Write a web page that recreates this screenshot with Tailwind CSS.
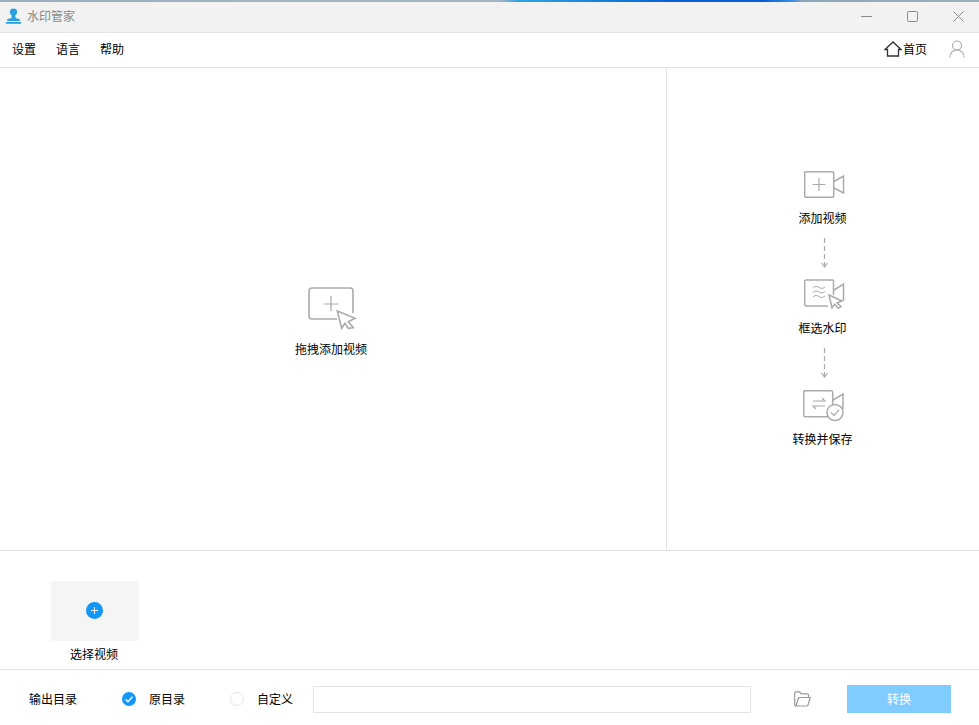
<!DOCTYPE html>
<html lang="zh-CN">

<head>
  <meta charset="UTF-8">
  <title>水印管家</title>
  <script src="https://cdn.jsdelivr.net/npm/@tailwindcss/browser@4"></script>
</head>

<body class="bg-white overflow-hidden font-['Noto_Sans_CJK_SC','Liberation_Sans',sans-serif] text-[12px] text-[#222]">
  <div class="w-[979px] h-[725px] flex flex-col">
    <!-- top stripe -->
    <div class="h-[2px] shrink-0 bg-[linear-gradient(90deg,#9db0bf_0%,#a3b5c2_51%,#2ea3e0_53%,#0a62d8_68%,#0a5fd8_78%,#3a8ee0_81%,#8fa6b8_82%,#9db0bf_100%)]"></div>

    <!-- title bar -->
    <div class="h-[31px] shrink-0 bg-[#f2f2f2] border-b border-[#e3e3e3] flex items-center pl-[6px] pb-[2px]">
      <svg class="w-[15px] h-[16px]" viewBox="0 0 15 16">
        <circle cx="7.5" cy="4" r="3.6" fill="#2b9fe0" />
        <path d="M5.8 7h3.4l.5 3.2 4 .8v2H1.300v-2l4-.8z" fill="#2b9fe0" />
        <rect x="0" y="14" width="15" height="1.800" fill="#2b9fe0" />
      </svg>
      <span class="ml-[6px] text-[#8a8a8a]">水印管家</span>
      <div class="ml-auto flex items-center pl-[2px] mr-[-2px]">
        <div class="w-[46px] h-[28px] flex items-center justify-center">
          <svg class="w-[11px] h-[11px]" viewBox="0 0 11 11"><path d="M0 5.500h11" stroke="#8a8a8a" /></svg>
        </div>
        <div class="w-[46px] h-[28px] flex items-center justify-center">
          <svg class="w-[11px] h-[11px]" viewBox="0 0 11 11"><rect x=".5" y=".5" width="10" height="10" rx="1" fill="none" stroke="#8a8a8a" /></svg>
        </div>
        <div class="w-[46px] h-[28px] flex items-center justify-center">
          <svg class="w-[11px] h-[11px]" viewBox="0 0 11 11"><path d="M.5.5l10 10M10.500.5l-10 10" stroke="#8a8a8a" fill="none" /></svg>
        </div>
      </div>
    </div>

    <!-- menu -->
    <div class="h-[35px] shrink-0 border-b border-[#e3e3e3] flex items-center pl-[12px] pb-[2px] text-black">
      <span>设置</span>
      <span class="ml-[20px]">语言</span>
      <span class="ml-[20px]">帮助</span>
      <div class="ml-auto flex items-center pr-[14px]">
        <svg class="w-[18px] h-[16px]" viewBox="0 0 18 16" fill="none" stroke="#333" stroke-width="1.300">
          <path d="M1 8.500 9 1l8 7.500h-2.500V15h-11V8.500z" />
        </svg>
        <span class="ml-[1px] text-black">首页</span>
        <svg class="ml-[22px] w-[16px] h-[18px]" viewBox="0 0 16 18" fill="none" stroke="#a8a8a8" stroke-width="1.100">
          <circle cx="8" cy="5.500" r="4.500" />
          <path d="M.8 17.500c0-4.500 3-7.500 7.200-7.500s7.200 3 7.200 7.500" />
        </svg>
      </div>
    </div>

    <!-- main area -->
    <div class="h-[483px] shrink-0 border-b border-[#e3e3e3] flex">
      <div class="w-[667px] shrink-0 border-r border-[#e3e3e3] flex flex-col items-center justify-center pt-[26px] pr-[4px]">
        <svg class="w-[50px] h-[44px] ml-[4px]" viewBox="0 0 50 44" fill="none" stroke="#aaa" stroke-width="1.600">
          <path d="M29 32H4a3 3 0 0 1-3-3V4a3 3 0 0 1 3-3h38a3 3 0 0 1 3 3v22" />
          <path stroke-width="1.200" d="M23 9v15M15.500 17h15" />
          <path d="M29.300 24 47 31.300l-6.700 3.400 5 6-5 .6-3.300-5-3.300 5z" fill="#fff" />
        </svg>
        <span class="mt-[9px] text-black">拖拽添加视频</span>
      </div>
      <div class="flex-1 flex flex-col items-center pt-[103px] pr-[1px]">
        <svg class="w-[41px] h-[27px] ml-[4px]" viewBox="0 0 41 27" fill="none" stroke="#aaa" stroke-width="1.500">
          <rect x=".7" y=".7" width="29" height="25.600" rx="1.500" />
          <path stroke-width="1.200" d="M15 7v13M8.500 13.500h13" />
          <path d="M30 10.500 39.500 5v17L30 17" />
        </svg>
        <span class="mt-[11px] text-black">添加视频</span>
        <svg class="mt-[10px] w-[9px] h-[31px] ml-[3px]" viewBox="0 0 9 31" fill="none" stroke="#aaa" stroke-width="1.200">
          <path d="M4.500 1v29" stroke-dasharray="5 3" />
          <path d="M1.500 26l3 4 3-4" />
        </svg>
        <svg class="mt-[11px] w-[41px] h-[30px] ml-[4px]" viewBox="0 0 41 30" fill="none" stroke="#aaa" stroke-width="1.500">
          <path d="M29.500 1H2A1.500 1.500 0 0 0 .7 2.500v23A1.500 1.500 0 0 0 2 27h22" />
          <path d="M29.500 1v15" />
          <path d="M30 11l9.500-6v17" />
          <path stroke-width="1" d="M9 9c2-2 4-2 6-.5s4 1 6-.5M9 13.500c2-2 4-2 6-.5s4 1 6-.5M9 18c2-2 4-2 6-.5s4 1 6-.5" />
          <path d="M25 16l13 6-5 2 4 3.500-2.500 1.800-4-4-2.500 3.700z" fill="#fff" />
        </svg>
        <span class="mt-[10px] text-black">框选水印</span>
        <svg class="mt-[11px] w-[9px] h-[31px] ml-[3px]" viewBox="0 0 9 31" fill="none" stroke="#aaa" stroke-width="1.200">
          <path d="M4.500 0v29" stroke-dasharray="5 3" />
          <path d="M1.500 25l3 4 3-4" />
        </svg>
        <svg class="mt-[11px] w-[42px] h-[32px] ml-[2px]" viewBox="0 0 42 32" fill="none" stroke="#aaa" stroke-width="1.500">
          <rect x=".7" y=".7" width="29" height="26" rx="1.500" />
          <path d="M30 10 40 4v15" />
          <path stroke-width="1.200" d="M10 11h12l-3-3M22 16H10l3 3" />
          <circle cx="32" cy="22.500" r="8" fill="#fff" />
          <path stroke-width="1.200" d="M28 22.500l3 3 5-5.500" />
        </svg>
        <span class="mt-[8px] text-black">转换并保存</span>
      </div>
    </div>

    <!-- video list -->
    <div class="h-[119px] shrink-0 border-b border-[#e3e3e3] pl-[51px] pt-[30px]">
      <div class="w-[88px] flex flex-col items-center">
        <div class="w-[88px] h-[60px] bg-[#f5f5f5] flex items-center justify-center pr-[1px] pb-[1px]">
          <svg class="w-[17px] h-[17px]" viewBox="0 0 17 17">
            <circle cx="8.500" cy="8.500" r="8.500" fill="#1296f7" />
            <path d="M8.500 5v7M5 8.500h7" stroke="#fff" />
          </svg>
        </div>
        <span class="mt-[4px] mr-[2px] text-black">选择视频</span>
      </div>
    </div>

    <!-- output bar -->
    <div class="flex-1 flex items-center pl-[29px] pt-[3px] text-black">
      <span>输出目录</span>
      <svg class="ml-[45px] w-[14px] h-[14px]" viewBox="0 0 14 14">
        <circle cx="7" cy="7" r="7" fill="#1296f7" />
        <path d="M3.500 7.200l2.500 2.500 4.500-5" stroke="#fff" stroke-width="1.300" fill="none" />
      </svg>
      <span class="ml-[13px]">原目录</span>
      <div class="ml-[45px] w-[14px] h-[14px] rounded-full border border-[#e3e3e3]"></div>
      <span class="ml-[13px]">自定义</span>
      <div class="ml-[20px] w-[438px] h-[27px] border border-[#e3e3e3]"></div>
      <svg class="ml-[43px] w-[17px] h-[16px]" viewBox="0 0 17 16" fill="none" stroke="#999" stroke-width="1.200">
        <path d="M2 15a1.300 1.300 0 0 1-1.300-1.300V1.800A1 1 0 0 1 1.700.8h4l1.500 2h6.300a1 1 0 0 1 1 1V6" />
        <path d="M2 15 4.500 6.500h11.800L14 14a1.300 1.300 0 0 1-1.300 1z" />
      </svg>
      <div class="ml-[36px] w-[104px] h-[28px] bg-[#80ccff] text-white flex items-center justify-center">转换</div>
    </div>
  </div>
</body>

</html>
